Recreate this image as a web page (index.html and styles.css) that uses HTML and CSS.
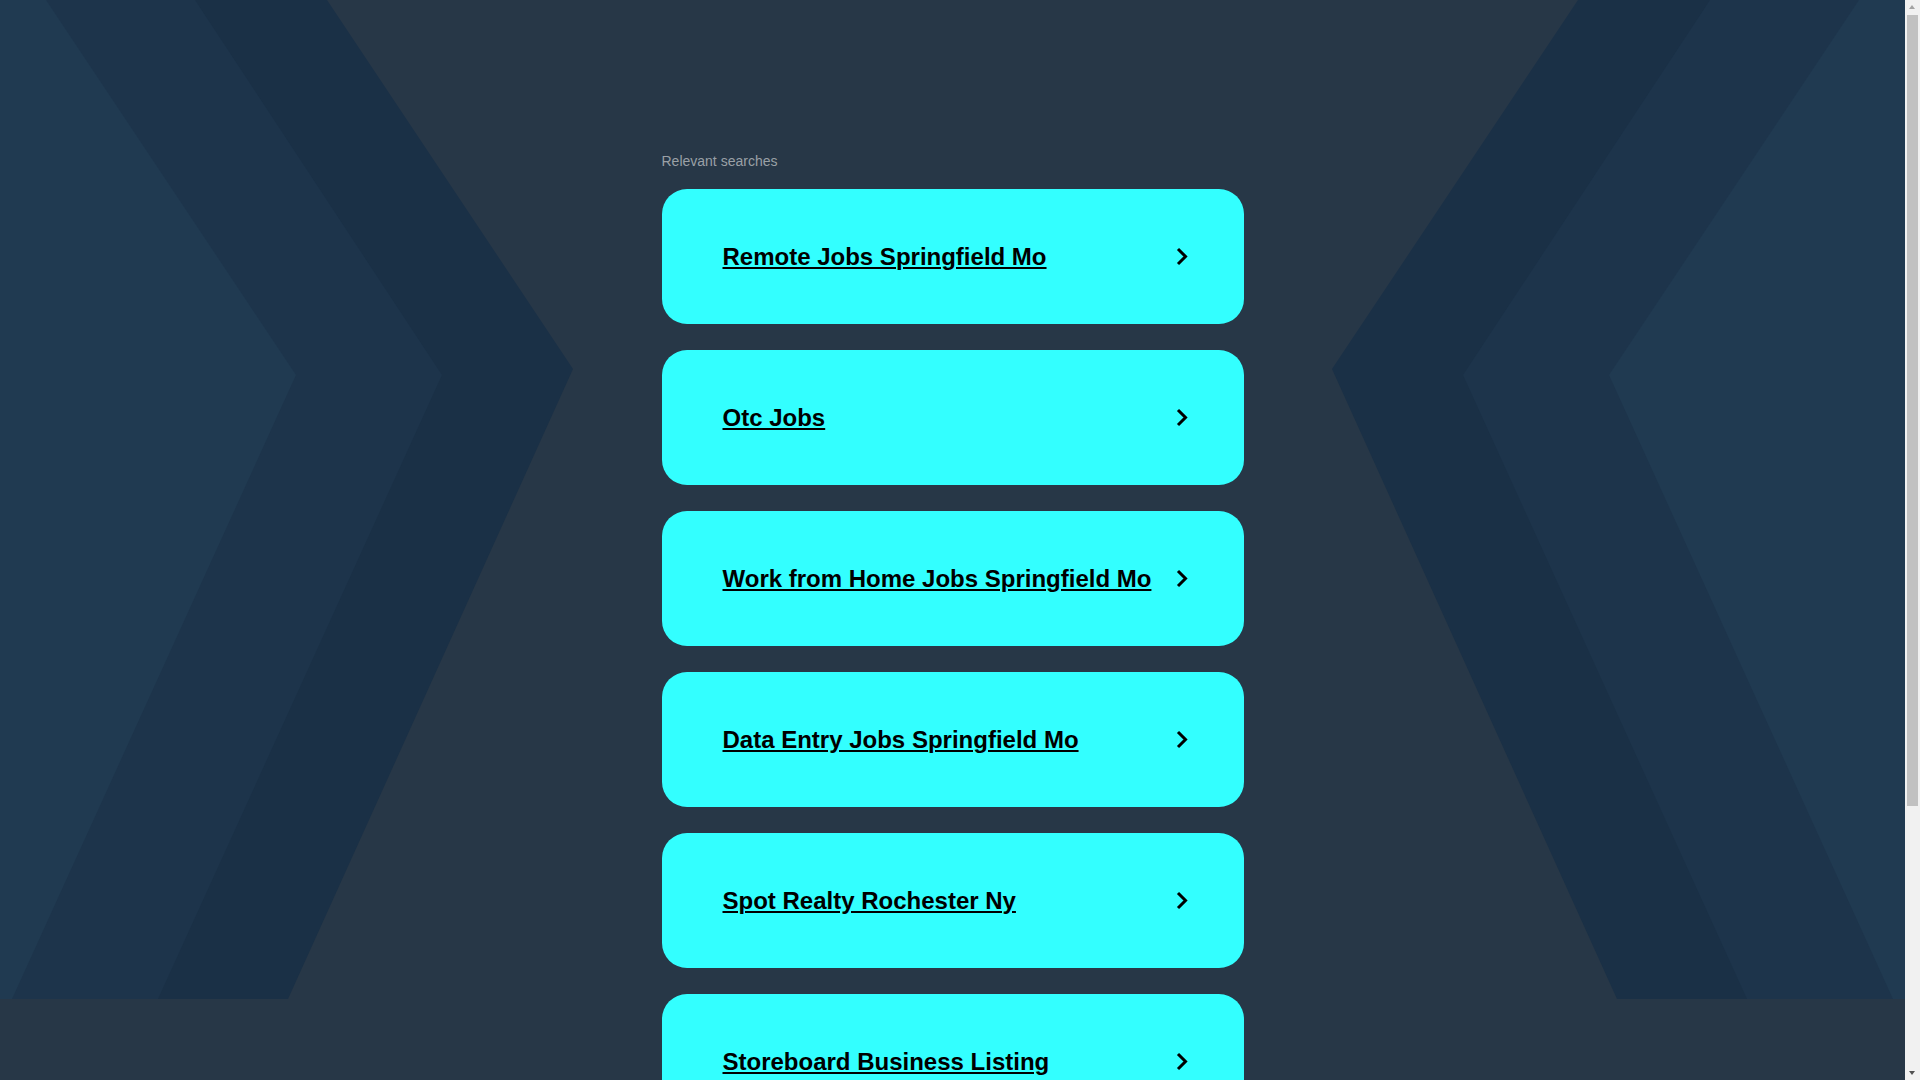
FILE: index.html
```html
<!DOCTYPE html>
<html lang="en">
<head>
<meta charset="utf-8">
<title>Relevant searches</title>
<link rel="stylesheet" href="styles.css">
</head>
<body>
<svg class="bg" viewBox="0 0 1905 999" preserveAspectRatio="none" aria-hidden="true">
  <polygon class="s1" points="0,0 327,0 573,369 288,999 0,999"/>
  <polygon class="s2" points="0,0 195,0 442,375 158,999 0,999"/>
  <polygon class="s3" points="0,0 46,0 296,375 12,999 0,999"/>
  <polygon class="s1" points="1905,0 1578,0 1332,369 1617,999 1905,999"/>
  <polygon class="s2" points="1905,0 1710,0 1463,375 1747,999 1905,999"/>
  <polygon class="s3" points="1905,0 1859,0 1609,375 1893,999 1905,999"/>
</svg>
<main class="wrap">
  <div class="label">Relevant searches</div>
  <ul class="list">
    <li><a class="card" href="#"><span class="txt">Remote Jobs Springfield Mo</span><svg class="chev" viewBox="0 0 12 19"><path d="M2 2 L9.5 9.5 L2 17"/></svg></a></li>
    <li><a class="card" href="#"><span class="txt">Otc Jobs</span><svg class="chev" viewBox="0 0 12 19"><path d="M2 2 L9.5 9.5 L2 17"/></svg></a></li>
    <li><a class="card" href="#"><span class="txt">Work from Home Jobs Springfield Mo</span><svg class="chev" viewBox="0 0 12 19"><path d="M2 2 L9.5 9.5 L2 17"/></svg></a></li>
    <li><a class="card" href="#"><span class="txt">Data Entry Jobs Springfield Mo</span><svg class="chev" viewBox="0 0 12 19"><path d="M2 2 L9.5 9.5 L2 17"/></svg></a></li>
    <li><a class="card" href="#"><span class="txt">Spot Realty Rochester Ny</span><svg class="chev" viewBox="0 0 12 19"><path d="M2 2 L9.5 9.5 L2 17"/></svg></a></li>
    <li><a class="card" href="#"><span class="txt">Storeboard Business Listing</span><svg class="chev" viewBox="0 0 12 19"><path d="M2 2 L9.5 9.5 L2 17"/></svg></a></li>
  </ul>
</main>
<div class="scrollbar" aria-hidden="true">
  <span class="arrow up"></span>
  <span class="thumb"></span>
  <span class="arrow down"></span>
</div>
</body>
</html>
```

FILE: styles.css
```css
html, body {
  margin: 0;
  padding: 0;
}
html {
  background: #273747;
}
body {
  background: #273747;
  font-family: "Liberation Sans", Arial, sans-serif;
  position: relative;
  min-height: 100vh;
  margin-right: 15px;
}
.bg {
  position: absolute;
  top: 0;
  left: 0;
  width: 100%;
  height: 999px;
  z-index: 0;
  display: block;
}
.s1 { fill: #1a3046; }
.s2 { fill: #1d344b; }
.s3 { fill: #203a51; }

.wrap {
  position: relative;
  z-index: 1;
  width: 582px;
  margin: 0 auto;
  padding: 153px 0 305px;
}
.label {
  font-size: 14px;
  line-height: 16px;
  color: #9aa0a6;
  margin-bottom: 20px;
}
.list {
  list-style: none;
  margin: 0;
  padding: 0;
  display: flex;
  flex-direction: column;
  gap: 26px;
}
.card {
  display: flex;
  align-items: center;
  justify-content: space-between;
  height: 135px;
  box-sizing: border-box;
  padding: 0 56px 0 61px;
  background: #33ffff;
  border-radius: 25px;
  color: #000;
  text-decoration: none;
}
.txt {
  font-size: 24px;
  font-weight: bold;
  text-decoration: underline;
  text-decoration-thickness: 2px;
  text-underline-offset: 2px;
}
.chev {
  width: 12px;
  height: 19px;
  flex: none;
}
.chev path {
  fill: none;
  stroke: #000;
  stroke-width: 3;
}

/* emulated browser scrollbar */
.scrollbar {
  position: fixed;
  top: 0;
  right: 0;
  width: 15px;
  height: 100vh;
  background: #f1f1f1;
  z-index: 5;
}
.thumb {
  position: absolute;
  top: 15px;
  left: 2px;
  width: 11px;
  height: 791px;
  background: #c1c1c1;
}
.arrow {
  position: absolute;
  left: 4px;
  width: 0;
  height: 0;
  border-left: 3.5px solid transparent;
  border-right: 3.5px solid transparent;
}
.arrow.up {
  top: 5px;
  border-bottom: 4px solid #a3a3a3;
}
.arrow.down {
  bottom: 5px;
  border-top: 4px solid #505050;
}
```
